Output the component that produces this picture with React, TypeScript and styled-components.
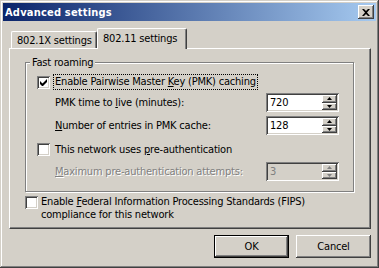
import styled, { createGlobalStyle } from 'styled-components'

const GlobalStyle = createGlobalStyle`
  html, body {
    margin: 0;
    padding: 0;
    background: #d4d0c8;
  }
  body {
    font-family: "DejaVu Sans Condensed", "Liberation Sans", Arial, sans-serif;
    font-size: 11px;
    letter-spacing: -0.2px;
    color: #000;
  }
`

const Window = styled.div`
  width: 379px;
  height: 268px;
  box-sizing: border-box;
  padding: 3px;
  background: #d4d0c8;
  box-shadow: inset -1px -1px #404040, inset 1px 1px #d4d0c8, inset -2px -2px #808080, inset 2px 2px #fff;
  display: flex;
  flex-direction: column;
`

const TitleBar = styled.div`
  height: 18px;
  flex: none;
  display: flex;
  align-items: center;
  justify-content: space-between;
  padding: 0 2px;
  background: linear-gradient(to right, #0a246a, #a6caf0);
  color: #fff;
  font-weight: bold;
  font-size: 11px;
  letter-spacing: 0.2px;
`

const CloseButton = styled.div`
  width: 16px;
  height: 14px;
  box-sizing: border-box;
  background: #d4d0c8;
  box-shadow: inset -1px -1px #404040, inset 1px 1px #fff, inset -2px -2px #808080, inset 2px 2px #d4d0c8;
  display: flex;
  align-items: center;
  justify-content: center;
`

const Body = styled.div`
  padding: 7px 5px 0 6px;
  display: flex;
  flex-direction: column;
`

const TabRow = styled.div`
  height: 20px;
  display: flex;
  align-items: flex-end;
  padding-left: 2px;
  position: relative;
  z-index: 1;
`

const Tab = styled.div<{ $active?: boolean }>`
  box-sizing: border-box;
  width: ${p => (p.$active ? 90 : 86)}px;
  height: ${p => (p.$active ? 21 : 17)}px;
  margin-bottom: ${p => (p.$active ? -1 : 0)}px;
  padding: ${p => (p.$active ? '3px 0 0 5px' : '2px 0 0 5px')};
  background: #d4d0c8;
  border-top: 1px solid #fff;
  border-left: 1px solid #fff;
  border-right: 1px solid #404040;
  border-radius: 2px 2px 0 0;
  box-shadow: inset -1px 0 #808080;
  white-space: nowrap;
  line-height: 13px;
`

const Panel = styled.div`
  height: 181px;
  box-sizing: border-box;
  border-top: 1px solid #fff;
  border-left: 1px solid #fff;
  border-right: 1px solid #404040;
  border-bottom: 1px solid #404040;
  box-shadow: inset -1px -1px #808080;
  padding: 7px 0 0 15px;
`

const Group = styled.fieldset`
  margin: 0;
  width: 329px;
  box-sizing: border-box;
  border: 1px solid #808080;
  box-shadow: inset 1px 1px #fff, 1px 1px #fff;
  padding: 5px 14px 10px 11px;
  min-width: 0;
`

const Legend = styled.legend`
  margin-left: -7px;
  padding: 0 2px;
  line-height: 13px;
  background: #d4d0c8;
`

const CheckRow = styled.div<{ $top?: number }>`
  display: flex;
  align-items: center;
  height: 16px;
  gap: 4px;
  margin-top: ${p => p.$top ?? 0}px;
`

const Box = styled.div`
  width: 13px;
  height: 13px;
  flex: none;
  box-sizing: border-box;
  background: #fff;
  box-shadow: inset 1px 1px #808080, inset -1px -1px #fff, inset 2px 2px #404040, inset -2px -2px #d4d0c8;
  display: flex;
  align-items: center;
  justify-content: center;
`

const Focus = styled.span`
  outline: 1px dotted #000;
  padding: 0 1px;
  line-height: 14px;
  white-space: nowrap;
`

const Label = styled.span<{ $disabled?: boolean }>`
  padding-left: 1px;
  line-height: 13px;
  color: ${p => (p.$disabled ? '#808080' : '#000')};
  text-shadow: ${p => (p.$disabled ? '1px 1px #fff' : 'none')};
  white-space: nowrap;
`

const SpinRow = styled.div<{ $top: number }>`
  display: flex;
  align-items: center;
  justify-content: space-between;
  height: 19px;
  padding-left: 17px;
  margin-top: ${p => p.$top}px;
`

const Spinner = styled.div<{ $disabled?: boolean }>`
  width: 73px;
  height: 19px;
  box-sizing: border-box;
  padding: 2px;
  display: flex;
  background: ${p => (p.$disabled ? '#d4d0c8' : '#fff')};
  color: ${p => (p.$disabled ? '#808080' : '#000')};
  box-shadow: inset 1px 1px #808080, inset -1px -1px #fff, inset 2px 2px #404040, inset -2px -2px #d4d0c8;
`

const SpinValue = styled.div`
  flex: 1;
  padding-left: 2px;
  line-height: 15px;
`

const SpinButtons = styled.div`
  width: 15px;
  display: flex;
  flex-direction: column;
`

const SpinButton = styled.div`
  flex: 1;
  background: #d4d0c8;
  box-shadow: inset -1px -1px #404040, inset 1px 1px #fff, inset -2px -2px #808080;
  display: flex;
  align-items: center;
  justify-content: center;
`

const FipsRow = styled.div`
  display: flex;
  align-items: flex-start;
  gap: 3px;
  margin-top: 4px;
`

const FipsText = styled.div`
  line-height: 13px;
  margin-top: -1px;
`

const ButtonRow = styled.div`
  display: flex;
  justify-content: flex-end;
  gap: 7px;
  margin-top: 6px;
`

const Button = styled.div<{ $default?: boolean }>`
  width: 75px;
  height: 23px;
  box-sizing: border-box;
  display: flex;
  align-items: center;
  justify-content: center;
  background: #d4d0c8;
  border: ${p => (p.$default ? '1px solid #000' : 'none')};
  box-shadow: ${p =>
    p.$default
      ? 'inset -1px -1px #404040, inset 1px 1px #fff, inset -2px -2px #808080'
      : 'inset -1px -1px #404040, inset 1px 1px #fff, inset -2px -2px #808080, inset 2px 2px #d4d0c8'};
`

function Check() {
  return (
    <svg width="7" height="7" viewBox="0 0 7 7">
      <path d="M0 2v3l2 2h1l4-4V0L2.5 4.5z" fill="#000" />
    </svg>
  )
}

function Arrow({ up, disabled }: { up?: boolean; disabled?: boolean }) {
  const fill = disabled ? '#808080' : '#000'
  return (
    <svg width="5" height="3" viewBox="0 0 5 3">
      <path d={up ? 'M2.5 0L5 3H0z' : 'M0 0h5L2.5 3z'} fill={fill} />
    </svg>
  )
}

function Spin({ value, disabled }: { value: string; disabled?: boolean }) {
  return (
    <Spinner $disabled={disabled}>
      <SpinValue>{value}</SpinValue>
      <SpinButtons>
        <SpinButton><Arrow up disabled={disabled} /></SpinButton>
        <SpinButton><Arrow disabled={disabled} /></SpinButton>
      </SpinButtons>
    </Spinner>
  )
}

export default function App() {
  return (
    <>
      <GlobalStyle />
      <Window>
        <TitleBar>
          <span>Advanced settings</span>
          <CloseButton>
            <svg width="8" height="7" viewBox="0 0 8 7">
              <path d="M0 0h2l2 2 2-2h2L5 3.5 8 7H6L4 5 2 7H0l3-3.5z" fill="#000" />
            </svg>
          </CloseButton>
        </TitleBar>
        <Body>
          <TabRow>
            <Tab>802.1X settings</Tab>
            <Tab $active>802.11 settings</Tab>
          </TabRow>
          <Panel>
            <Group>
              <Legend>Fast roaming</Legend>
              <CheckRow>
                <Box><Check /></Box>
                <Focus>Enable Pairwise Master <u>K</u>ey (PMK) caching</Focus>
              </CheckRow>
              <SpinRow $top={3}>
                <Label>PMK time to <u>l</u>ive (minutes):</Label>
                <Spin value="720" />
              </SpinRow>
              <SpinRow $top={4}>
                <Label><u>N</u>umber of entries in PMK cache:</Label>
                <Spin value="128" />
              </SpinRow>
              <CheckRow $top={6}>
                <Box />
                <Label>This network uses <u>p</u>re-authentication</Label>
              </CheckRow>
              <SpinRow $top={5}>
                <Label $disabled><u>M</u>aximum pre-authentication attempts:</Label>
                <Spin value="3" disabled />
              </SpinRow>
            </Group>
            <FipsRow>
              <Box />
              <FipsText>
                Enable <u>F</u>ederal Information Processing Standards (FIPS)
                <br />
                compliance for this network
              </FipsText>
            </FipsRow>
          </Panel>
          <ButtonRow>
            <Button $default>OK</Button>
            <Button>Cancel</Button>
          </ButtonRow>
        </Body>
      </Window>
    </>
  )
}
